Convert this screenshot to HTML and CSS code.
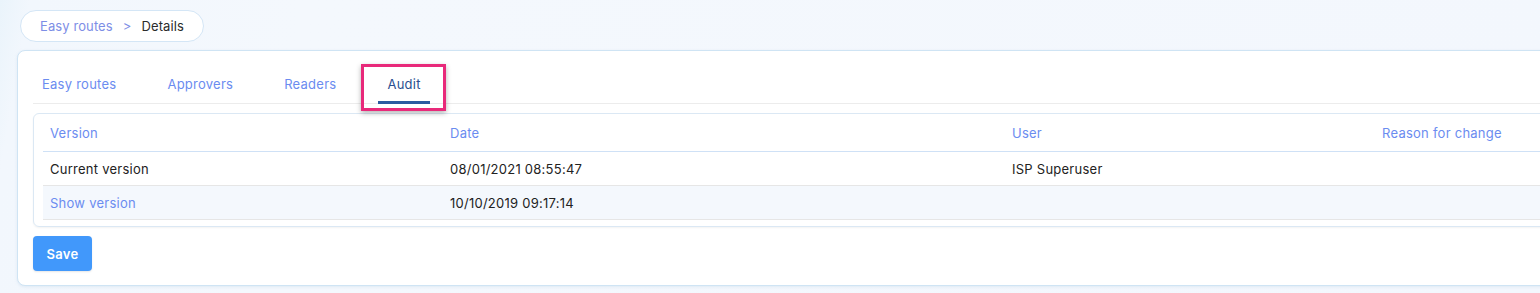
FILE: index.html
```html
<!DOCTYPE html>
<html>
<head>
<meta charset="utf-8">
<link rel="stylesheet" href="styles.css">
</head>
<body>
<div class="page">
  <nav class="crumbs">
    <a class="crumb-link">Easy routes</a>
    <span class="crumb-sep">&gt;</span>
    <span class="crumb-current">Details</span>
  </nav>
  <section class="card">
    <div class="tabs">
      <div class="tab">Easy routes</div>
      <div class="tab">Approvers</div>
      <div class="tab">Readers</div>
      <div class="tab active">Audit<span class="highlight"></span></div>
    </div>
    <div class="table-wrap">
      <table class="audit">
        <colgroup>
          <col class="c1"><col class="c2"><col class="c3"><col class="c4">
        </colgroup>
        <thead>
          <tr><th>Version</th><th>Date</th><th>User</th><th>Reason for change</th></tr>
        </thead>
        <tbody>
          <tr><td>Current version</td><td>08/01/2021 08:55:47</td><td>ISP Superuser</td><td></td></tr>
          <tr class="alt"><td class="link">Show version</td><td>10/10/2019 09:17:14</td><td></td><td></td></tr>
        </tbody>
      </table>
    </div>
    <button class="save">Save</button>
  </section>
</div>
</body>
</html>
```
FILE: styles.css
```css
html, body {
  margin: 0;
  padding: 0;
  width: 1540px;
  height: 293px;
  overflow: hidden;
}
body {
  font-family: Inter, "Noto Sans", sans-serif;
  font-size: 13px;
  letter-spacing: 0.25px;
  color: #222;
  background: linear-gradient(100deg, #eaf4fb 0px, #f2f7fd 30px, #f4f8fd 300px, #f3f7fd 100%);
}
.page {
  padding: 10px 0 0 17px;
  display: flex;
  flex-direction: column;
  align-items: flex-start;
  gap: 8px;
}
.crumbs {
  margin-left: 3px;
  height: 32px;
  box-sizing: border-box;
  border: 1px solid #d4e6f6;
  border-radius: 16px;
  background: #fff;
  display: flex;
  align-items: center;
  padding: 0 19px 0 19px;
  gap: 10px;
  white-space: nowrap;
  letter-spacing: 0.1px;
}
.crumb-link { color: #7d8ee6; }
.crumb-sep { color: #7d8ee6; }
.crumb-current { color: #2b2b2b; }
.card {
  width: 1560px;
  height: 236px;
  box-sizing: border-box;
  background: #fff;
  border: 1px solid #cfe4f4;
  border-radius: 8px;
  padding: 17px 0 0 15px;
  box-shadow: 0 1px 3px rgba(160, 190, 220, 0.25);
}
.tabs {
  display: flex;
  gap: 33px;
  border-bottom: 1px solid #ececec;
  height: 36px;
  box-sizing: border-box;
}
.tab {
  position: relative;
  padding: 8px 9px 0 9px;
  color: #6b8cf0;
  height: 36px;
  box-sizing: border-box;
  line-height: 16px;
}
.tab.active {
  color: #2b4f8f;
}
.tab.active::after {
  content: "";
  position: absolute;
  left: 0;
  right: 0;
  bottom: 0;
  height: 3px;
  background: #2b5ba0;
}
.highlight {
  position: absolute;
  left: -17px;
  top: -4px;
  width: 85px;
  height: 47px;
  box-sizing: border-box;
  border: 3px solid #e8297a;
  box-shadow: 0 2px 5px rgba(0, 0, 0, 0.3);
}
.table-wrap {
  margin-top: 9px;
  border: 1px solid #dbe8f4;
  border-radius: 6px;
  padding: 0 0 6px 9px;
  box-shadow: 0 1px 2px rgba(0,0,0,0.05);
}
.audit {
  border-collapse: collapse;
  width: 1540px;
  table-layout: fixed;
}
.c1 { width: 400px; }
.c2 { width: 562px; }
.c3 { width: 370px; }
.c4 { width: 208px; }
.audit th {
  text-align: left;
  font-weight: 400;
  color: #6b8cf0;
  height: 37px;
  padding: 0 7px;
  border-bottom: 1px solid #cfe1f6;
}
.audit td {
  height: 33px;
  padding: 0 7px;
  border-bottom: 1px solid #e6e6e6;
  color: #222;
}
.audit tr.alt td { background: #f4f8fd; }
.audit td.link { color: #6b8cf0; }
.save {
  margin-top: 9px;
  width: 59px;
  height: 35px;
  border: none;
  border-radius: 4px;
  background: #4198fb;
  color: #fff;
  font-family: Inter, "Noto Sans", sans-serif;
  font-size: 13px;
  letter-spacing: 0.25px;
  font-weight: 600;
  box-shadow: 0 1px 2px rgba(0,0,0,0.1);
}
```
